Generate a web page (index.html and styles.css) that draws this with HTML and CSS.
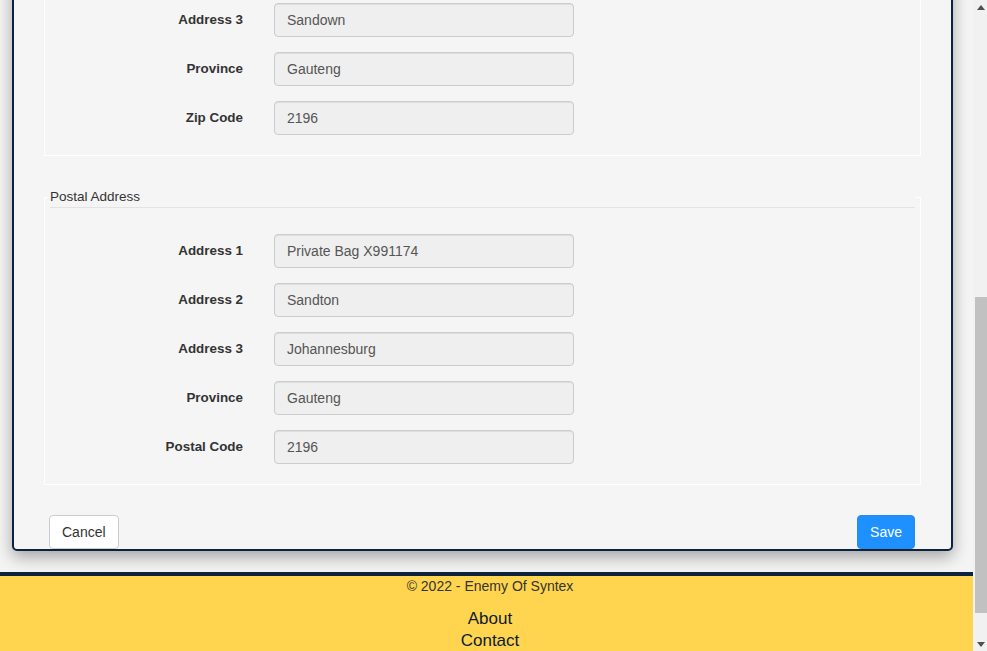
FILE: index.html
```html
<!DOCTYPE html>
<html lang="en">
<head>
<meta charset="utf-8">
<title>Edit Address</title>
<link rel="stylesheet" href="styles.css">
</head>
<body>
<div class="app">
  <div class="viewport">
    <main class="content">
      <form class="card">
        <fieldset class="group">
          <legend class="group-title">Physical Address</legend>
          <div class="row"><label class="row-label">Address 1</label><input class="field" type="text" value="Building 5" readonly></div>
          <div class="row"><label class="row-label">Address 2</label><input class="field" type="text" value="Maude Street" readonly></div>
          <div class="row"><label class="row-label">Address 3</label><input class="field" type="text" value="Sandown" readonly></div>
          <div class="row"><label class="row-label">Province</label><input class="field" type="text" value="Gauteng" readonly></div>
          <div class="row"><label class="row-label">Zip Code</label><input class="field" type="text" value="2196" readonly></div>
        </fieldset>
        <fieldset class="group">
          <legend class="group-title">Postal Address</legend>
          <div class="row"><label class="row-label">Address 1</label><input class="field" type="text" value="Private Bag X991174" readonly></div>
          <div class="row"><label class="row-label">Address 2</label><input class="field" type="text" value="Sandton" readonly></div>
          <div class="row"><label class="row-label">Address 3</label><input class="field" type="text" value="Johannesburg" readonly></div>
          <div class="row"><label class="row-label">Province</label><input class="field" type="text" value="Gauteng" readonly></div>
          <div class="row"><label class="row-label">Postal Code</label><input class="field" type="text" value="2196" readonly></div>
        </fieldset>
        <div class="actions">
          <button type="button" class="btn btn-default">Cancel</button>
          <button type="button" class="btn btn-primary">Save</button>
        </div>
      </form>
    </main>
    <footer class="footer">
      <p class="copyright">&copy; 2022 - Enemy Of Syntex</p>
      <nav class="footer-links">
        <a class="footer-link" href="#">About</a>
        <a class="footer-link" href="#">Contact</a>
      </nav>
    </footer>
  </div>
  <div class="scrollbar">
    <div class="sb-arrow"><svg width="8" height="5" viewBox="0 0 8 5"><path d="M0 5 L4 0 L8 5 Z" fill="#505050"/></svg></div>
    <div class="sb-space-top"></div>
    <div class="sb-thumb"></div>
    <div class="sb-space-bottom"></div>
    <div class="sb-arrow"><svg width="8" height="5" viewBox="0 0 8 5"><path d="M0 0 L8 0 L4 5 Z" fill="#505050"/></svg></div>
  </div>
</div>
</body>
</html>
```

FILE: styles.css
```css
* { box-sizing: border-box; }

html, body {
  margin: 0;
  padding: 0;
  height: 100%;
  overflow: hidden;
}

body {
  font-family: "Liberation Sans", Arial, Helvetica, sans-serif;
  font-size: 14px;
  line-height: 20px;
  color: #333;
  background: #f4f4f4;
}

.app {
  display: flex;
  width: 987px;
  height: 651px;
}

.viewport {
  width: 973px;
  height: 651px;
  display: flex;
  flex-direction: column;
  justify-content: flex-end;
  overflow: hidden;
}

.content {
  flex: none;
  padding: 0 20px 21px 12px;
}

.card {
  margin: 0;
  background: #f5f5f5;
  border: 2px solid #0b2341;
  border-radius: 5px;
  padding: 20px 30px 0 30px;
  box-shadow: 0 6px 16px rgba(0, 0, 0, 0.33);
}

.group {
  margin: 0;
  border: 1px solid #ffffff;
  padding: 0 5px 5px 5px;
  min-width: 0;
}

.group + .group {
  margin-top: 30px;
}

.group-title {
  display: block;
  width: 100%;
  padding: 0;
  margin: 0 0 26px 0;
  font-size: 13.5px;
  line-height: 21px;
  color: #333;
  border-bottom: 1px solid #e3e3e3;
}

.row {
  display: grid;
  grid-template-columns: 193px 300px;
  column-gap: 31px;
  align-items: center;
  margin-bottom: 15px;
}

.row-label {
  text-align: right;
  font-weight: bold;
  font-size: 13.4px;
  color: #333;
}

.field {
  display: block;
  width: 300px;
  height: 34px;
  padding: 6px 12px;
  font-family: "Liberation Sans", Arial, Helvetica, sans-serif;
  font-size: 14px;
  line-height: 20px;
  color: #555;
  background: #efefef;
  border: 1px solid #ccc;
  border-radius: 4px;
  box-shadow: inset 0 1px 1px rgba(0, 0, 0, 0.075);
  outline: none;
}

.actions {
  display: flex;
  justify-content: space-between;
  margin-top: 30px;
  padding: 0 6px 0 5px;
}

.btn {
  height: 34px;
  padding: 6px 12px;
  font-family: "Liberation Sans", Arial, Helvetica, sans-serif;
  font-size: 14px;
  line-height: 20px;
  border-radius: 4px;
  border: 1px solid #ccc;
  cursor: pointer;
}

.btn-default {
  background: #fff;
  color: #333;
}

.btn-primary {
  background: #1e90ff;
  border-color: #2a8ae8;
  color: #fff;
}

.footer {
  flex: none;
  height: 79px;
  overflow: hidden;
  background: #ffd54f;
  border-top: 4px solid #0b2341;
  text-align: center;
  padding-left: 7px;
}

.copyright {
  margin: 0;
  font-size: 14px;
  line-height: 20px;
  color: #333;
}

.footer-links {
  display: flex;
  flex-direction: column;
  align-items: center;
  margin-top: 12px;
}

.footer-link {
  font-size: 17px;
  line-height: 22px;
  color: #0d1a2e;
  text-decoration: none;
}

.scrollbar {
  width: 14px;
  height: 651px;
  background: #f1f1f1;
  display: flex;
  flex-direction: column;
}

.sb-arrow {
  height: 14px;
  display: flex;
  align-items: center;
  justify-content: center;
  padding-left: 2px;
}

.sb-space-top { height: 283px; }

.sb-thumb {
  height: 316px;
  margin-left: 2px;
  background: #c1c1c1;
}

.sb-space-bottom { flex: 1; }
```
